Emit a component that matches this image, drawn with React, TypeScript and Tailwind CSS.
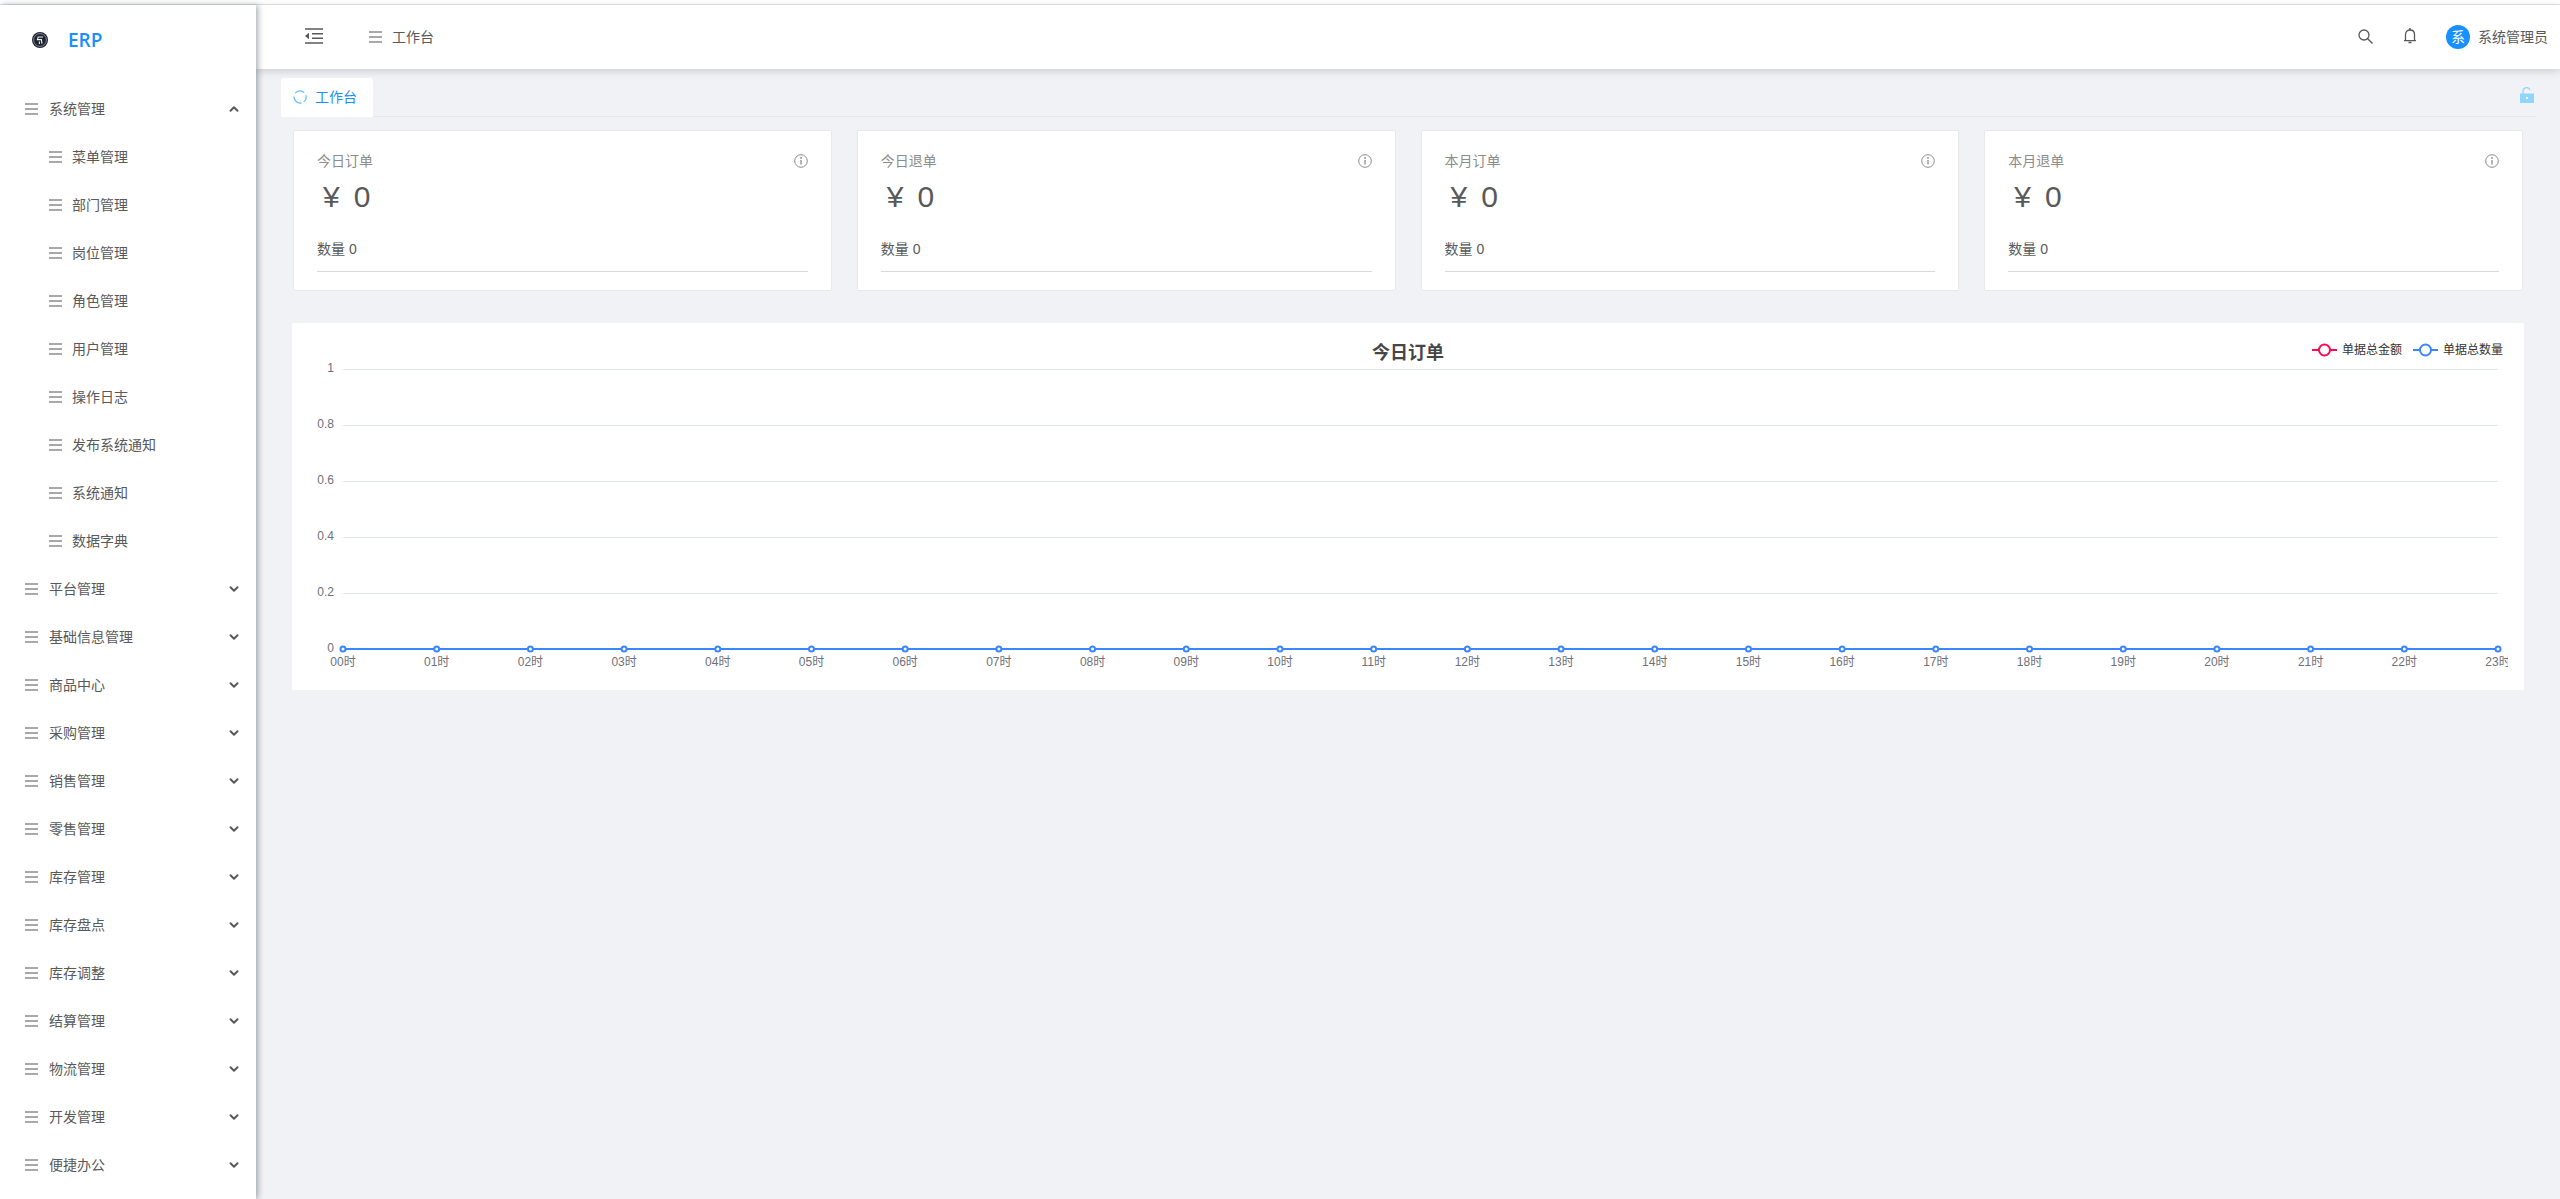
import { ChevronDown } from "lucide-react";

const children = ["菜单管理", "部门管理", "岗位管理", "角色管理", "用户管理", "操作日志", "发布系统通知", "系统通知", "数据字典"];
const groups = ["平台管理", "基础信息管理", "商品中心", "采购管理", "销售管理", "零售管理", "库存管理", "库存盘点", "库存调整", "结算管理", "物流管理", "开发管理", "便捷办公"];

const cards = [
  { title: "今日订单" },
  { title: "今日退单" },
  { title: "本月订单" },
  { title: "本月退单" },
];

const font = '"Liberation Sans", "Noto Sans CJK SC", sans-serif';
const yTicks = ["1", "0.8", "0.6", "0.4", "0.2", "0"];
const hours = Array.from({ length: 24 }, (_, i) => i);
const hourX = (i: number) => 343 + (i * 2155) / 23;

function Bars() {
  return (
    <svg width="13" height="12" viewBox="0 0 13 12" className="shrink-0">
      <path d="M0 1h13M0 6h13M0 11h13" stroke="#8c8c8c" strokeWidth="1.6" fill="none" />
    </svg>
  );
}

function Info() {
  return (
    <svg width="14" height="14" viewBox="0 0 14 14">
      <circle cx="7" cy="7" r="6.3" stroke="#8c8c8c" strokeWidth="1" fill="none" />
      <path d="M7 6v4.5" stroke="#8c8c8c" strokeWidth="1.3" />
      <circle cx="7" cy="4" r="0.9" fill="#8c8c8c" />
    </svg>
  );
}

function Logo() {
  return (
    <svg width="16" height="16" viewBox="0 0 16 16">
      <circle cx="8" cy="8" r="8" fill="#1d2330" />
      <circle cx="8" cy="8" r="6.4" fill="none" stroke="#aeb4bd" strokeWidth="0.7" />
      <path d="M11 5H6.2L5.4 7.6H9.4L10 11.6M7.4 9.4V12" fill="none" stroke="#f2f2f2" strokeWidth="1.1" />
    </svg>
  );
}

function Group({ label, open }: { label: string; open?: boolean }) {
  return (
    <div className="flex h-12 items-center pl-[25px] pr-[15px] text-[#595959]">
      <Bars />
      <span className="ml-[11px] flex-1 text-sm">{label}</span>
      <ChevronDown size={14} strokeWidth={3.4} color="#595959" className={open ? "rotate-180" : ""} />
    </div>
  );
}

function Sidebar() {
  return (
    <aside className="relative z-20 flex h-[1194px] w-[256px] shrink-0 flex-col overflow-hidden bg-white shadow-[2px_0_6px_rgba(0,21,41,0.35)]">
      <div className="flex h-[70px] items-center pl-[32px]">
        <Logo />
        <span className="ml-[20px] mt-[1px] text-[19px] font-semibold text-[#1890ff]" style={{ fontFamily: '"Open Sans", sans-serif' }}>
          ERP
        </span>
      </div>
      <div className="mt-[10px] flex flex-col">
        <Group label="系统管理" open />
        {children.map((c) => (
          <div key={c} className="flex h-12 items-center pl-[49px] text-[#595959]">
            <Bars />
            <span className="ml-[10px] text-sm">{c}</span>
          </div>
        ))}
        {groups.map((g) => (
          <Group key={g} label={g} />
        ))}
      </div>
    </aside>
  );
}

function Header() {
  return (
    <header className="relative z-10 flex h-[64px] items-center bg-white pl-[49px] pr-[12px] shadow-[0_2px_8px_rgba(0,0,0,0.16)]">
      <svg width="18" height="16" viewBox="0 0 18 16" className="mb-[2px]">
        <path d="M0 1h18M7 5.7h11M7 10.3h11M0 15h18" stroke="#595959" strokeWidth="1.5" fill="none" />
        <path d="M0 8l4-3.2v6.4z" fill="#595959" />
      </svg>
      <div className="ml-[46px]">
        <Bars />
      </div>
      <span className="ml-[10px] flex-1 text-sm text-[#595959]">工作台</span>
      <svg width="15" height="15" viewBox="0 0 15 15" className="mb-[2px]">
        <circle cx="6" cy="6" r="5" fill="none" stroke="#595959" strokeWidth="1.3" />
        <path d="M9.7 9.7L14.5 14.5" stroke="#595959" strokeWidth="1.4" />
      </svg>
      <svg width="14" height="16" viewBox="0 0 14 16" className="mb-[2px] ml-[30px]">
        <path d="M2.5 12.6V6.5C2.5 3.8 4.4 2 7 2s4.5 1.8 4.5 4.5v6.1zM1 12.6h12" fill="none" stroke="#595959" strokeWidth="1.3" />
        <path d="M5.5 14.6h3M7 0v2" stroke="#595959" strokeWidth="1.5" />
      </svg>
      <div className="ml-[29px] flex h-6 w-6 items-center justify-center rounded-full bg-[#1890ff] text-sm text-white">系</div>
      <span className="ml-[8px] text-sm text-[#595959]">系统管理员</span>
    </header>
  );
}

function Tabs() {
  return (
    <div className="ml-[25px] mr-[24px] mt-[9px] flex h-[39px] items-end justify-between border-b border-[#e8e8e8]">
      <div className="-mb-px flex h-[39px] w-[92px] items-center rounded-t-[3px] bg-white pb-[2px] pl-[12px] text-sm text-[#1890ff]">
        <svg width="14" height="14" viewBox="0 0 14 14">
          <path d="M2.2 3.2A6 6 0 0 1 11.2 2.6M12.8 5.2A6 6 0 0 1 10.6 12M8.4 12.9A6 6 0 0 1 1.1 6.6" fill="none" stroke="#69c0ff" strokeWidth="1.3" />
        </svg>
        <span className="ml-[8px]">工作台</span>
      </div>
      <svg width="14" height="16" viewBox="0 0 14 16" className="mb-[13px] mr-[2px]">
        <path d="M3 7V4a3.6 3.6 0 0 1 7-1" fill="none" stroke="#91d5ff" strokeWidth="1.2" />
        <path d="M0 6.5h14V16H0z" fill="#91d5ff" />
        <rect x="6" y="10" width="2" height="2" fill="#fff" />
      </svg>
    </div>
  );
}

function StatCard({ title }: { title: string }) {
  return (
    <div className="h-[161px] rounded-[2px] border border-[#e8e8e8] bg-white px-[23px] pt-[20px]">
      <div className="flex h-[20px] items-center justify-between">
        <span className="text-sm text-[#8c8c8c]">{title}</span>
        <Info />
      </div>
      <div className="mt-[7px] flex gap-[14px] pl-[6px] text-[30px] leading-[38px] text-[#595959]">
        <span>¥</span>
        <span>0</span>
      </div>
      <div className="mt-[22px] h-[34px] border-b border-[#d9d9d9] text-sm leading-[22px] text-[#595959]">数量 0</div>
    </div>
  );
}

function Chart() {
  return (
    <div className="mt-[32px] h-[367px] bg-white">
      <svg width="2232" height="367" viewBox="292 323 2232 367" className="block" style={{ fontFamily: font }}>
        <defs>
          <clipPath id="labels">
            <rect x="292" y="323" width="2216" height="367" />
          </clipPath>
        </defs>
        {yTicks.map((t, i) => (
          <g key={t}>
            {i < 5 && <line x1="343" x2="2498" y1={369.5 + i * 56} y2={369.5 + i * 56} stroke="#e0e6f1" />}
            <text x="334" y={372 + i * 56} textAnchor="end" fontSize="12" fill="#6e7079">
              {t}
            </text>
          </g>
        ))}
        <text x="1408" y="359" textAnchor="middle" fontSize="18" fontWeight="700" fill="#464646">
          今日订单
        </text>
        <line x1="2312" x2="2337" y1="350" y2="350" stroke="#ff0a54" strokeWidth="2" />
        <circle cx="2324.5" cy="350" r="5.5" fill="#fff" stroke="#ff0a54" strokeWidth="2" />
        <text x="2342" y="354" fontSize="12" fill="#333">
          单据总金额
        </text>
        <line x1="2413" x2="2438" y1="350" y2="350" stroke="#3a86ff" strokeWidth="2" />
        <circle cx="2425.5" cy="350" r="5.5" fill="#fff" stroke="#3a86ff" strokeWidth="2" />
        <text x="2443" y="354" fontSize="12" fill="#333">
          单据总数量
        </text>
        <line x1="343" x2="2498" y1="649" y2="649" stroke="#3a86ff" strokeWidth="2" />
        <g clipPath="url(#labels)">
          {hours.map((h) => (
            <text key={h} x={hourX(h)} y="666" textAnchor="middle" fontSize="12" fill="#6e7079">
              {String(h).padStart(2, "0")}时
            </text>
          ))}
        </g>
        {hours.map((h) => (
          <circle key={h} cx={hourX(h)} cy="649" r="2.5" fill="#fff" stroke="#3a86ff" strokeWidth="2" />
        ))}
      </svg>
    </div>
  );
}

export default function App() {
  return (
    <div className="h-[1199px] w-[2560px] overflow-hidden bg-[#f0f2f5]" style={{ fontFamily: font }}>
      <div className="h-[5px] border-b border-[#e4e4e4] bg-white" />
      <div className="flex">
        <Sidebar />
        <main className="flex-1">
          <Header />
          <Tabs />
          <div className="ml-[36px] mr-[36px] mt-[13px]">
            <div className="grid grid-cols-4 gap-[25px] pl-[1px] pr-[1px]">
              {cards.map((c) => (
                <StatCard key={c.title} title={c.title} />
              ))}
            </div>
            <Chart />
          </div>
        </main>
      </div>
    </div>
  );
}
